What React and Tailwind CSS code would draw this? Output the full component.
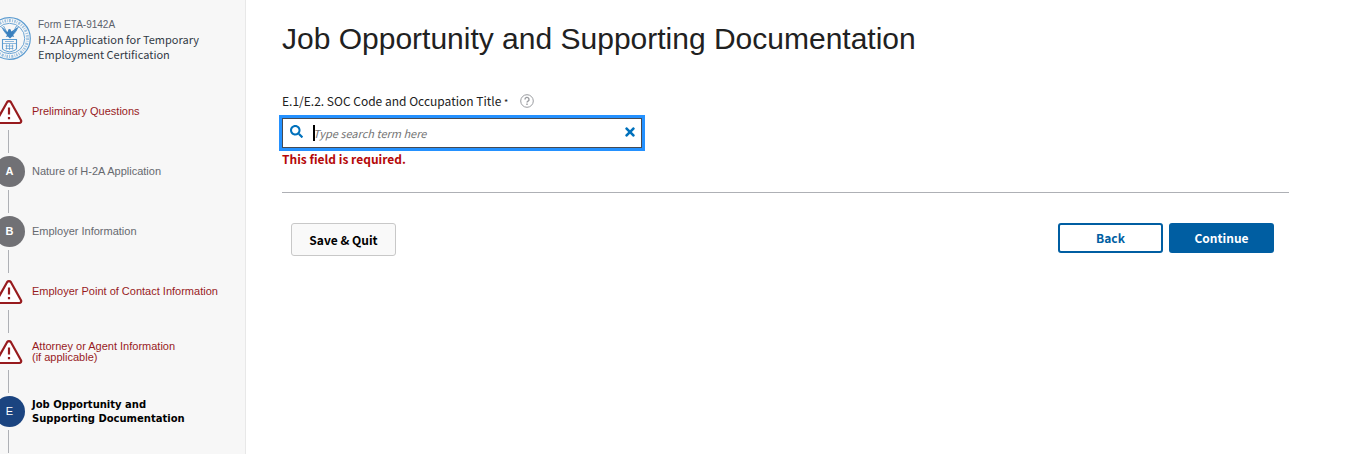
import React, { useState } from "react";
import { FaSearch, FaTimes } from "react-icons/fa";

const steps = [
  { id: "preliminary", lines: ["Preliminary Questions"], status: "error" },
  { id: "nature", letter: "A", lines: ["Nature of H-2A Application"], status: "visited" },
  { id: "employer", letter: "B", lines: ["Employer Information"], status: "visited" },
  { id: "contact", lines: ["Employer Point of Contact Information"], status: "error" },
  { id: "attorney", lines: ["Attorney or Agent Information", "(if applicable)"], status: "error" },
  { id: "job", letter: "E", lines: ["Job Opportunity and", "Supporting Documentation"], status: "current" },
];

function Seal() {
  return (
    <svg viewBox="0 0 44 44" className="w-11 h-11 shrink-0" fill="none" stroke="#5b9bd0" aria-hidden="true">
      <circle cx="21.5" cy="22.500" r="20.800" strokeWidth="1.200" />
      <circle cx="21.5" cy="22.500" r="18" strokeWidth="3" strokeOpacity="0.6" strokeDasharray="1.5 1 0.7 1.2 2 1.3 1 1.2" />
      <circle cx="21.5" cy="22.500" r="15.200" strokeWidth="0.900" />
      {/* eagle */}
      <path
        d="M14 11l5.500 5 1.200-3 1.800.2.800 2.300L30 11l-1.500 4-3.300 4 1 2-2-.5-2.200 2-2.200-2-2 .5 1.200-2-3.300-4z"
        fill="#3a7fbd"
        stroke="none"
      />
      <path d="M13.500 11l4.500 6.500M15.500 10l3 5.500M30.500 11L26 17.500M28.500 10l-3 5.500" strokeWidth="0.900" />
      {/* shield */}
      <path d="M14.500 23.500h14v9c0 1.500-3 2.500-7 3.500-4-1-7-2-7-3.500z" strokeWidth="1.100" />
      <path d="M15 27.500h13M17 25.500h9M17.500 30h8M21.500 28v6M17.500 32.500h8M18.500 28.500v5M24.500 28.500v5" strokeWidth="0.700" />
    </svg>
  );
}

function WarningIcon() {
  return (
    <svg viewBox="0 0 28 26" className="w-7 h-[26px] mr-0.5 shrink-0" aria-hidden="true">
      <path
        d="M12.200 3a2.200 2.200 0 0 1 3.600 0l10.200 18.200a1.900 1.900 0 0 1-1.700 2.800H3.700A1.900 1.900 0 0 1 2 21.200z"
        fill="#fff"
        stroke="#981b1e"
        strokeWidth="2.200"
      />
      <path d="M14 8.500v7M14 18v2.200" stroke="#981b1e" strokeWidth="2.200" />
    </svg>
  );
}

function StepMarker({ step }) {
  if (step.status === "error") {
    return (
      <span className="flex items-center justify-center h-[31px]">
        <WarningIcon />
      </span>
    );
  }
  return (
    <span
      className={`flex items-center justify-center w-[31px] h-[31px] rounded-full text-white text-[11px] ${
        step.status === "current" ? "bg-[#1b4480]" : "bg-[#717175] font-bold"
      }`}
    >
      {step.letter}
    </span>
  );
}

function Sidebar() {
  return (
    <aside className="w-[246px] shrink-0 bg-[#f7f7f7] border-r border-[#e8e8e8] overflow-hidden">
      <header className="flex items-start pt-4 h-24 -ml-3">
        <Seal />
        <div className="pl-1.5 pt-0.5 whitespace-nowrap">
          <p className="text-[10px] leading-[14px] text-[#5b616b]">Form ETA-9142A</p>
          <p className="font-['Noto_Sans_CJK_SC',sans-serif] text-[11px] leading-[15px] text-[#323a45]">
            H-2A Application for Temporary
            <br />
            Employment Certification
          </p>
        </div>
      </header>
      <nav aria-label="Form sections">
        <ol className="-ml-1.5">
          {steps.map((step) => (
            <li key={step.id} className="flex h-[60px]">
              <div className="flex flex-col items-center gap-[3px] w-[31px] shrink-0">
                <StepMarker step={step} />
                <span className="w-px h-[23px] mr-0.5 bg-[#aeb0b5]" />
              </div>
              <a
                href={`#${step.id}`}
                aria-current={step.status === "current" ? "step" : undefined}
                className={`flex flex-col justify-center h-[31px] pl-[7px] whitespace-nowrap ${
                  step.status === "current"
                    ? "font-['DejaVu_Sans',sans-serif] text-[10px] leading-[14px] font-bold text-black"
                    : step.status === "error"
                    ? "text-[11px] leading-[11px] text-[#981b1e]"
                    : "text-[11px] leading-[11px] text-[#66696f]"
                }`}
              >
                {step.lines.map((line) => (
                  <span key={line}>{line}</span>
                ))}
              </a>
            </li>
          ))}
        </ol>
      </nav>
    </aside>
  );
}

function OccupationSearch() {
  const [term, setTerm] = useState("");

  return (
    <div className="font-['Noto_Sans_CJK_SC',sans-serif]">
      <div className="flex items-center h-5 text-xs text-[#212121]">
        <label htmlFor="soc-code">
          E.1/E.2. SOC Code and Occupation Title <span className="text-[9px]">*</span>
        </label>
        <button type="button" aria-label="Help" className="ml-3">
          <svg viewBox="0 0 14 14" className="w-3.5 h-3.5" fill="none" stroke="#9a9ca0" aria-hidden="true">
            <circle cx="7" cy="7" r="6.300" />
            <path d="M5 5.500a2 2 0 1 1 3 1.600c-.7.400-1 .7-1 1.400M7 9.500v1.400" strokeWidth="1.400" />
          </svg>
        </button>
      </div>
      <div className="relative flex items-center max-w-[360px] h-[30px] mt-[7px] bg-white border border-[#454a52] outline-3 outline-[#2491ff]">
        <FaSearch className="w-[13px] h-[13px] ml-[7px] mb-[3px] shrink-0 text-[#0071bc]" />
        <input
          id="soc-code"
          type="text"
          value={term}
          onChange={(e) => setTerm(e.target.value)}
          placeholder="Type search term here"
          className="flex-1 min-w-0 h-full pl-2.5 text-[11px] italic text-[#212121] placeholder:text-[#757575] outline-none"
        />
        <span className="absolute left-[30px] top-1.5 w-0.5 h-4 bg-black" />
        <button type="button" aria-label="Clear search" onClick={() => setTerm("")} className="mr-1 mb-[3px] text-[#0071bc]">
          <FaTimes className="w-[14px] h-[14px]" />
        </button>
      </div>
      <p className="mt-px text-xs leading-5 font-bold text-[#b50909]">This field is required.</p>
    </div>
  );
}

function FormActions() {
  const base = "w-[105px] rounded-[3px] text-xs font-bold";
  return (
    <div className="flex items-start justify-between pl-[9px] pr-[15px] pt-[30px] font-['Noto_Sans_CJK_SC',sans-serif]">
      <button type="button" className={`${base} h-[33px] bg-[#f9f9f9] border border-[#c8c8c8] text-black`}>
        Save &amp; Quit
      </button>
      <div className="flex gap-1.5">
        <button type="button" className={`${base} h-[30px] bg-white border-2 border-[#005ea2] text-[#005ea2]`}>
          Back
        </button>
        <button type="button" className={`${base} h-[30px] bg-[#005ea2] text-white`}>
          Continue
        </button>
      </div>
    </div>
  );
}

export default function App() {
  return (
    <div className="flex min-h-screen bg-white font-['Liberation_Sans',Arial,sans-serif]">
      <Sidebar />
      <main className="flex-1 min-w-0 pl-9 pr-14 pt-[21px]">
        <h1 className="text-[30px] leading-9 text-[#212121] mb-[34px]">Job Opportunity and Supporting Documentation</h1>
        <OccupationSearch />
        <hr className="mt-[23px] border-[#aeb0b5]" />
        <FormActions />
      </main>
    </div>
  );
}
